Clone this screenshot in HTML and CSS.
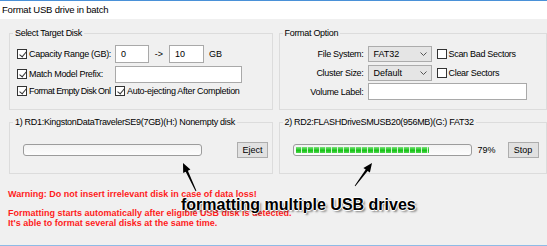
FILE: index.html
```
<!DOCTYPE html>
<html lang="en">
<head>
    <meta charset="UTF-8">
    <title>Format USB drive in batch</title>
    <link rel="stylesheet" href="styles.css">
</head>
<body>
    <div class="window">
        <div class="titlebar">Format USB drive in batch</div>

        <div class="client">
            <!-- Target disk + format options -->
            <div class="top-row">
                <fieldset class="group top">
                    <legend>Select Target Disk</legend>
                    <div class="target-body">
                        <div class="row r1">
                            <label class="check wide"><span class="cb on"></span>Capacity Range (GB):</label>
                            <span class="edit cap-from">0</span>
                            <span class="arrow-txt">-&gt;</span>
                            <span class="edit cap-to">10</span>
                            <span class="unit">GB</span>
                        </div>
                        <div class="row r2">
                            <label class="check wide"><span class="cb on"></span>Match Model Prefix:</label>
                            <span class="edit prefix"></span>
                        </div>
                        <div class="row r3">
                            <label class="check wide tight"><span class="cb on"></span>Format Empty Disk Onl</label>
                            <label class="check"><span class="cb on"></span>Auto-ejecting After Completion</label>
                        </div>
                    </div>
                </fieldset>

                <fieldset class="group top right">
                    <legend>Format Option</legend>
                    <div class="option-body">
                        <span class="opt-label">File System:</span>
                        <span class="combo">FAT32<svg width="7" height="4" viewBox="0 0 7 4"><polyline points="0.5,0.5 3.5,3.5 6.5,0.5" fill="none" stroke="#555" stroke-width="1"/></svg></span>
                        <label class="check"><span class="cb"></span>Scan Bad Sectors</label>

                        <span class="opt-label">Cluster Size:</span>
                        <span class="combo">Default<svg width="7" height="4" viewBox="0 0 7 4"><polyline points="0.5,0.5 3.5,3.5 6.5,0.5" fill="none" stroke="#555" stroke-width="1"/></svg></span>
                        <label class="check"><span class="cb"></span>Clear Sectors</label>

                        <span class="opt-label">Volume Label:</span>
                        <span class="edit volume"></span>
                    </div>
                </fieldset>
            </div>

            <!-- Drives being formatted -->
            <div class="disk-row">
                <fieldset class="group disk">
                    <legend>1) RD1:KingstonDataTravelerSE9(7GB)(H:) Nonempty disk</legend>
                    <div class="disk-body">
                        <div class="progress"></div>
                        <button class="btn eject">Eject</button>
                    </div>
                </fieldset>

                <fieldset class="group disk right">
                    <legend>2) RD2:FLASHDriveSMUSB20(956MB)(G:) FAT32</legend>
                    <div class="disk-body">
                        <div class="progress"><div class="fill" style="width: 77%"></div></div>
                        <span class="percent">79%</span>
                        <button class="btn stop">Stop</button>
                    </div>
                </fieldset>
            </div>

            <div class="notes">
                <p class="warn">Warning: Do not insert irrelevant disk in case of data loss!</p>
                <p>Formatting starts automatically after eligible USB disk is detected.<br>It's able to format several disks at the same time.</p>
            </div>
        </div>

        <!-- Annotation over the screenshot -->
        <div class="caption">formatting multiple USB drives</div>
        <svg class="arrows" width="547" height="246" viewBox="0 0 547 246">
            <polygon points="183,162 190.4,168.5 187.9,169.7 196.4,189.8 195.6,190.2 185.7,170.7 183.2,171.9" fill="#000"/>
            <polygon points="372,162 369.9,171.6 367.6,170 355.3,185.2 354.7,184.8 365.7,168.5 363.4,166.9" fill="#000"/>
        </svg>
    </div>
</body>
</html>
```

FILE: styles.css
```
/* Base */
* {
    box-sizing: border-box;
}

body {
    margin: 0;
    font-family: 'Liberation Sans', Arial, sans-serif;
    font-size: 9px;
    color: #000;
    background: #f0f0f0;
}

/* Window frame */
.window {
    position: relative;
    width: 547px;
    height: 246px;
    overflow: hidden;
    background: #f0f0f0;
    border-top: 1px solid #4a91d8;
    border-bottom: 1px solid #8dbbe6;
}

.titlebar {
    height: 18px;
    line-height: 17px;
    padding-left: 2px;
    background: #fff;
    font-size: 9.5px;
    letter-spacing: -0.2px;
}

.client {
    padding: 8px 0 0 9px;
}

/* Group boxes */
.top-row,
.disk-row {
    display: flex;
    gap: 6px;
}

.group {
    margin: 0;
    padding: 0;
    min-width: 0;
    width: 265px;
    border: 1px solid #dcdcdc;
    border-radius: 0;
}

.group.right {
    width: 270px;
}

.group legend {
    margin-left: 3px;
    padding: 0 2px;
    line-height: 13px;
    letter-spacing: -0.3px;
}

.group.top {
    height: 83px;
}

.disk-row {
    margin-top: 6px;
}

.group.disk {
    height: 58px;
}

/* Checkboxes */
.check {
    display: flex;
    align-items: center;
    gap: 2px;
    white-space: nowrap;
    letter-spacing: -0.3px;
}

.check.tight {
    letter-spacing: -0.55px;
}

.cb {
    position: relative;
    flex-shrink: 0;
    width: 10px;
    height: 10px;
    border: 1px solid #333;
    background: #fff;
}

.cb.on::after {
    content: '';
    position: absolute;
    left: 2.5px;
    top: 0;
    width: 3px;
    height: 6px;
    border-right: 1px solid #333;
    border-bottom: 1px solid #333;
    transform: rotate(40deg);
}

/* Edit boxes */
.edit {
    display: block;
    height: 18px;
    line-height: 16px;
    padding-left: 5px;
    background: #fff;
    border: 1px solid #a9a9a9;
}

/* Select Target Disk */
.target-body {
    padding: 4px 0 0 7px;
}

.row {
    display: flex;
    align-items: center;
}

.row.r1 {
    height: 19px;
}

.row.r2 {
    height: 18px;
    margin-top: 2px;
}

.row.r3 {
    height: 14px;
    margin-top: 1px;
}

.check.wide {
    width: 98px;
}

.cap-from {
    width: 34px;
}

.arrow-txt {
    width: 20px;
    text-align: center;
}

.cap-to {
    width: 35px;
}

.unit {
    margin-left: 5px;
}

.prefix {
    width: 127px;
    height: 17px;
}

/* Format Option */
.option-body {
    display: grid;
    grid-template-columns: 84px 64px auto;
    grid-auto-rows: 17px;
    row-gap: 2px;
    column-gap: 4px;
    align-items: center;
    padding-top: 5px;
}

.opt-label {
    text-align: right;
    letter-spacing: -0.3px;
}

.combo {
    display: flex;
    align-items: center;
    justify-content: space-between;
    height: 16px;
    padding: 0 4px 0 5px;
    background: #e5e5e5;
    border: 1px solid #acacac;
}

.option-body .check {
    margin-left: 1px;
}

.volume {
    grid-column: 2 / 4;
    width: 159px;
    height: 17px;
}

/* Drive rows */
.disk-body {
    display: flex;
    align-items: center;
    padding: 13px 0 0 13px;
}

.progress {
    position: relative;
    width: 179px;
    height: 12px;
    padding: 2px;
    background: linear-gradient(#f3f3f3, #fdfdfd);
    border: 1px solid #9c9c9c;
    border-radius: 3px;
}

.fill {
    height: 100%;
    background:
        repeating-linear-gradient(90deg, transparent 0 5px, #d8f3d8 5px 6px),
        linear-gradient(#7ee27e, #13c313 55%, #4fd44f);
}

.percent {
    margin-left: 6px;
    width: 30px;
}

.btn {
    height: 16px;
    padding: 0;
    font-family: inherit;
    font-size: 9px;
    color: #000;
    background: #e1e1e1;
    border: 1px solid #adadad;
}

.eject {
    width: 31px;
    margin-left: 35px;
}

.stop {
    width: 31px;
}

/* Notes */
.notes {
    margin: 15px 0 0 -1px;
    color: #ff1c1c;
    font-weight: bold;
    font-size: 9px;
}

.notes p {
    margin: 0;
    line-height: 10px;
}

.notes .warn {
    margin-bottom: 9px;
}

/* Annotation overlay */
.caption {
    position: absolute;
    left: 181px;
    top: 195px;
    font-size: 16px;
    font-weight: bold;
    line-height: 18px;
    color: #000;
    text-shadow:
        -1px 0 0 #fff, 1px 0 0 #fff, 0 -1px 0 #fff, 0 1px 0 #fff,
        2px 2px 2px rgba(0, 0, 0, 0.45);
}

.arrows {
    position: absolute;
    left: 0;
    top: 0;
    pointer-events: none;
}
```
